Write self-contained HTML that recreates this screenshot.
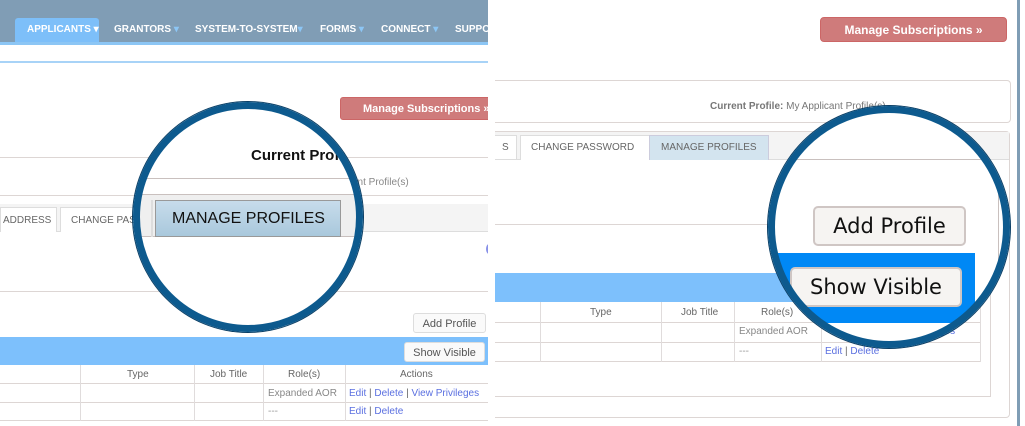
<!DOCTYPE html>
<html><head><meta charset="utf-8"><style>
*{margin:0;padding:0;box-sizing:border-box}
body{width:1025px;height:426px;position:relative;overflow:hidden;background:#fff;font-family:"Liberation Sans",Arial,sans-serif}
.a{position:absolute;white-space:nowrap}
.hl{position:absolute;height:1px;background:#ddd6d4}
.vl{position:absolute;width:1px;background:#e0dcdc}
.t{position:absolute;font-size:10px;color:#666;white-space:nowrap}
.lk{color:#5a6fe0}
.btn{position:absolute;background:#fafafa;border:1px solid #ddd;border-radius:3px;font-size:11px;color:#555;text-align:center;white-space:nowrap}
</style></head><body>
<!-- LEFT PANEL -->
<div class="a" style="left:0;top:0;width:488px;height:426px;overflow:hidden">
  <div class="a" style="left:0;top:0;width:488px;height:42px;background:#809db5"></div>
  <div class="a" style="left:0;top:42px;width:488px;height:3px;background:#8cc6f5"></div>
  <div class="a" style="left:15px;top:18px;width:84px;height:24px;background:#7dbff9;border-radius:3px 3px 0 0"></div>
  <div class="a" style="left:0;top:18px;width:488px;height:24px;font-size:10px;font-weight:bold;color:#fff">
    <span class="a" style="left:27px;top:6px">APPLICANTS ▾</span>
    <span class="a" style="left:114px;top:6px">GRANTORS <span style="color:#8cc6f5">▾</span></span>
    <span class="a" style="left:195px;top:6px">SYSTEM-TO-SYSTEM<span style="color:#8cc6f5">▾</span></span>
    <span class="a" style="left:320px;top:6px">FORMS <span style="color:#8cc6f5">▾</span></span>
    <span class="a" style="left:381px;top:6px">CONNECT <span style="color:#8cc6f5">▾</span></span>
    <span class="a" style="left:455px;top:6px">SUPPORT</span>
  </div>
  <div class="a" style="left:0;top:61px;width:488px;height:2px;background:#a8d3f7"></div>
  <div class="a" style="left:340px;top:97px;width:160px;height:23px;background:#cf7b7b;border:1px solid #c66;border-radius:3px;color:#fff;font-weight:bold;font-size:11px;padding:5px 0 0 22px">Manage Subscriptions »</div>
  <div class="hl" style="left:0;top:157px;width:488px"></div>
  <div class="hl" style="left:0;top:195px;width:488px"></div>
  <div class="t" style="left:352px;top:177px;color:#888">ant Profile(s)</div>
  <div class="a" style="left:0;top:204px;width:488px;height:28px;background:#f4f4f4;border-bottom:1px solid #ddd"></div>
  <div class="a" style="left:0;top:207px;width:57px;height:25px;background:#fff;border:1px solid #ddd;border-bottom:0;font-size:10px;color:#666;padding:7px 0 0 2px">ADDRESS</div>
  <div class="a" style="left:60px;top:207px;width:92px;height:25px;background:#fff;border:1px solid #ddd;border-bottom:0;font-size:10px;color:#666;padding:7px 0 0 10px;overflow:hidden">CHANGE PASSWORD</div>
  <div class="a" style="left:486px;top:244px;width:6px;height:10px;border-radius:50%;border:2px solid #8891e8"></div>
  <div class="hl" style="left:0;top:291px;width:488px"></div>
  <div class="btn" style="left:413px;top:313px;width:73px;height:20px;padding-top:4px">Add Profile</div>
  <div class="a" style="left:0;top:337px;width:488px;height:28px;background:#7dc0fc"></div>
  <div class="btn" style="left:404px;top:342px;width:81px;height:20px;padding-top:4px">Show Visible</div>
  <div class="hl" style="left:0;top:383px;width:488px"></div>
  <div class="hl" style="left:0;top:402px;width:488px"></div>
  <div class="hl" style="left:0;top:420px;width:488px"></div>
  <div class="vl" style="left:80px;top:365px;height:56px"></div>
  <div class="vl" style="left:194px;top:365px;height:56px"></div>
  <div class="vl" style="left:263px;top:365px;height:56px"></div>
  <div class="vl" style="left:345px;top:365px;height:56px"></div>
  <div class="t" style="left:127px;top:369px">Type</div>
  <div class="t" style="left:210px;top:369px">Job Title</div>
  <div class="t" style="left:288px;top:369px">Role(s)</div>
  <div class="t" style="left:400px;top:369px">Actions</div>
  <div class="t" style="left:268px;top:388px;color:#888">Expanded AOR</div>
  <div class="t" style="left:349px;top:388px"><span class="lk">Edit</span> | <span class="lk">Delete</span> | <span class="lk">View Privileges</span></div>
  <div class="t" style="left:268px;top:406px;color:#999">---</div>
  <div class="t" style="left:349px;top:406px"><span class="lk">Edit</span> | <span class="lk">Delete</span></div>
  <!-- circle -->
  <div class="a" style="left:137px;top:106px;width:222px;height:222px;border-radius:50%;overflow:hidden;background:#fff">
    <div class="a" style="left:114px;top:41px;font-size:15px;font-weight:bold;color:#111">Current Profile</div>
    <div class="a" style="left:0;top:72px;width:222px;height:1px;background:#c9c0be"></div>
    <div class="a" style="left:0;top:88px;width:222px;height:43px;background:#efefef;border-top:1px solid #c9c0be;border-bottom:1px solid #c9c0be"></div>
    <div class="a" style="left:14px;top:94px;width:2px;height:37px;background:#ddd"></div>
    <div class="a" style="left:18px;top:94px;width:186px;height:37px;background:linear-gradient(#c7dceb,#a9c8dc);border:1px solid #999;font-size:16px;color:#111;padding:9px 0 0 16px">MANAGE PROFILES</div>
  </div>
  <div class="a" style="left:133px;top:102px;width:230px;height:230px;border-radius:50%;border:7px solid #0d5a8e;box-shadow:0 0 0 1px #0a3f66"></div>
</div>
<!-- RIGHT PANEL -->
<div class="a" style="left:1017px;top:0;width:3px;height:426px;background:#7f9db5"></div>
<div class="a" style="left:820px;top:17px;width:187px;height:25px;background:#cf7b7b;border:1px solid #c66;border-radius:4px;color:#fff;font-weight:bold;font-size:12px;text-align:center;padding-top:5px">Manage Subscriptions »</div>
<div class="a" style="left:495px;top:80px;width:516px;height:43px;border:1px solid #ddd6d4;border-left:0;border-radius:0 4px 4px 0"></div>
<div class="t" style="left:710px;top:101px;color:#777"><b>Current Profile:</b> My Applicant Profile(s)</div>
<div class="a" style="left:495px;top:131px;width:515px;height:287px;border:1px solid #ddd6d4;border-left:0;border-radius:0 4px 4px 0"></div>
<div class="a" style="left:495px;top:132px;width:514px;height:28px;background:#f4f4f4;border-bottom:1px solid #ddd"></div>
<div class="a" style="left:495px;top:135px;width:22px;height:25px;background:#fff;border:1px solid #ddd;border-left:0;font-size:10px;color:#666;padding:6px 0 0 7px">S</div>
<div class="a" style="left:520px;top:135px;width:130px;height:25px;background:#fff;border:1px solid #ddd;border-bottom:0;font-size:10px;color:#666;padding:6px 0 0 10px">CHANGE PASSWORD</div>
<div class="a" style="left:649px;top:135px;width:120px;height:25px;background:#d3e4ef;border:1px solid #ccd;border-bottom:0;font-size:10px;color:#666;padding:6px 0 0 11px">MANAGE PROFILES</div>
<div class="a" style="left:495px;top:160px;width:496px;height:237px;border-right:1px solid #ddd6d4;border-bottom:1px solid #ddd6d4"></div>
<div class="hl" style="left:495px;top:224px;width:496px"></div>
<div class="a" style="left:495px;top:273px;width:485px;height:29px;background:#7dc0fc"></div>
<div class="hl" style="left:495px;top:322px;width:485px"></div>
<div class="hl" style="left:495px;top:342px;width:485px"></div>
<div class="hl" style="left:495px;top:361px;width:485px"></div>
<div class="vl" style="left:540px;top:302px;height:60px"></div>
<div class="vl" style="left:661px;top:302px;height:60px"></div>
<div class="vl" style="left:734px;top:302px;height:60px"></div>
<div class="vl" style="left:821px;top:302px;height:60px"></div>
<div class="vl" style="left:980px;top:302px;height:60px"></div>
<div class="t" style="left:590px;top:307px">Type</div>
<div class="t" style="left:681px;top:307px">Job Title</div>
<div class="t" style="left:761px;top:307px">Role(s)</div>
<div class="t" style="left:739px;top:326px;color:#888">Expanded AOR</div>
<div class="t" style="left:939px;top:326px"><span class="lk">ges</span></div>
<div class="t" style="left:739px;top:346px;color:#999">---</div>
<div class="t" style="left:825px;top:346px"><span class="lk">Edit</span> | <span class="lk">Delete</span></div>
<!-- right circle -->
<div class="a" style="left:772px;top:110px;width:234px;height:234px;border-radius:50%;overflow:hidden;background:#fff">
  <div class="a" style="left:0;top:49px;width:234px;height:1px;background:#c9c0be"></div>
  <div class="a" style="left:226px;top:50px;width:1px;height:100px;background:#c9c0be"></div>
  <div class="a" style="left:0;top:143px;width:203px;height:70px;background:#0088f5"></div>
  <div class="a" style="left:41px;top:96px;width:153px;height:40px;background:#f6f4f2;border:2px solid #cfc6c4;border-radius:5px;font-family:'DejaVu Sans',sans-serif;font-size:21px;color:#111;text-align:center;padding-top:6px">Add Profile</div>
  <div class="a" style="left:18px;top:157px;width:172px;height:40px;background:#f6f4f2;border:2px solid #cfc6c4;border-radius:5px;font-family:'DejaVu Sans',sans-serif;font-size:21px;color:#111;text-align:center;padding-top:6px">Show Visible</div>
</div>
<div class="a" style="left:768px;top:106px;width:242px;height:242px;border-radius:50%;border:7px solid #0d5a8e;box-shadow:0 0 0 1px #0a3f66"></div>
</body></html>
